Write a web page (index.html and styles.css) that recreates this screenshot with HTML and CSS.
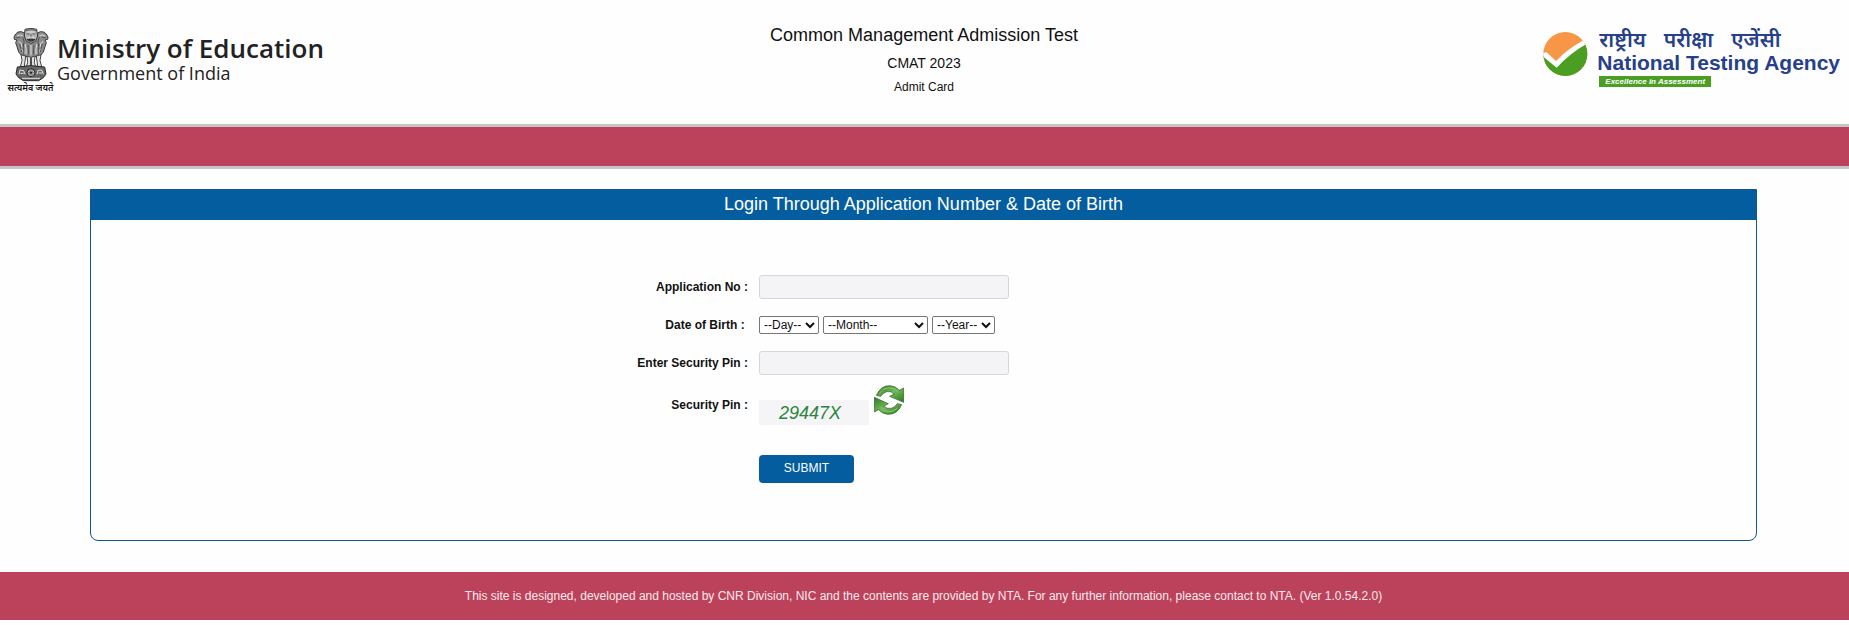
FILE: index.html
```
<!DOCTYPE html>
<html lang="en">
<head>
    <meta charset="UTF-8">
    <meta name="viewport" content="width=device-width, initial-scale=1.0">
    <title>CMAT 2023 - Admit Card</title>
    <link rel="stylesheet" href="styles.css">
</head>
<body>
    <header>
        <div class="ministry">
            <div class="emblem">
                <svg width="36" height="54" viewBox="0 0 108 162" aria-hidden="true">
                    <!-- lions -->
                    <g fill="#8c8c8c" stroke="#3a3a3a" stroke-width="3" stroke-linejoin="round">
                        <path d="M36 16 L26 11 L15 12 L8 18 L3 27 L4 34 L12 36 L8 44 L12 56 L17 72 L27 84 L44 86 L54 91 L64 86 L81 84 L91 72 L96 56 L100 44 L96 36 L104 34 L105 27 L100 18 L92 12 L82 11 L72 16 Z"/>
                        <path d="M36 4 Q54 -2 71 4 L74 24 L68 40 L54 46 L40 40 L34 24 Z" fill="#b4b4b4"/>
                    </g>
                    <g fill="none" stroke="#e4e4e4" stroke-width="3">
                        <path d="M12 25 Q20 17 29 23 M96 25 Q88 17 79 23"/>
                        <path d="M17 40 Q28 44 27 58 M91 40 Q80 44 81 58"/>
                        <path d="M22 62 Q31 65 33 76 M86 62 Q77 65 75 76"/>
                        <path d="M36 48 Q41 62 39 78 M72 48 Q67 62 69 78 M54 51 V82"/>
                        <path d="M43 12 H65 M43 30 Q54 22 65 30"/>
                    </g>
                    <g fill="none" stroke="#333" stroke-width="2">
                        <path d="M38 8 Q54 2 70 8 M41 18 H50 M58 18 H67 M54 18 V27"/>
                        <path d="M42 34 Q54 44 66 34 M46 34 H62" stroke-width="4"/>
                        <path d="M10 29 H20 M98 29 H88 M29 28 Q37 42 31 55 M79 28 Q71 42 77 55"/>
                        <path d="M20 48 L26 72 M30 48 L32 80 M45 50 L47 80 M63 50 L61 80 M78 48 L76 80 M88 48 L82 72"/>
                    </g>
                    <!-- legs -->
                    <g fill="#e2e2e2" stroke="#444" stroke-width="3">
                        <path d="M24 80 L27 98 L22 116 H34 L38 84 Z"/>
                        <path d="M84 80 L81 98 L86 116 H74 L70 84 Z"/>
                        <path d="M42 84 L44 104 L39 119 H52 L53 88 Z"/>
                        <path d="M66 84 L64 104 L69 119 H56 L55 88 Z"/>
                    </g>
                    <!-- abacus with the wheel -->
                    <path d="M13 117 Q54 109 95 117 L99 138 L91 149 L77 158 H31 L17 149 L9 138 Z" fill="#666" stroke="#2a2a2a" stroke-width="3"/>
                    <circle cx="54" cy="134" r="12" fill="#c8c8c8" stroke="#222" stroke-width="3"/>
                    <path d="M54 123 V145 M43 134 H65 M46 126 L62 142 M62 126 L46 142" stroke="#444" stroke-width="2"/>
                    <circle cx="54" cy="134" r="3" fill="#222"/>
                    <path d="M18 139 L21 126 L32 128 L36 139 M23 136 H32 M72 139 L75 127 L86 126 L91 139 M77 135 H87 M27 151 H81" fill="none" stroke="#e2e2e2" stroke-width="3"/>
                </svg>
                <span class="motto" lang="hi">सत्यमेव जयते</span>
            </div>
            <div class="ministry-text">
                <div class="ministry-name">Ministry of Education</div>
                <div class="ministry-gov">Government of India</div>
            </div>
        </div>

        <div class="exam">
            <h1>Common Management Admission Test</h1>
            <h2>CMAT 2023</h2>
            <h3>Admit Card</h3>
        </div>

        <div class="agency">
            <svg width="46" height="46" viewBox="0 0 138 138" aria-hidden="true">
                <defs>
                    <clipPath id="disc"><circle cx="70" cy="69" r="66"/></clipPath>
                </defs>
                <g clip-path="url(#disc)">
                    <rect width="138" height="138" fill="#f79646"/>
                    <path d="M0 70 L43 103 L138 28 V138 H0 Z" fill="#4a9e22"/>
                    <path d="M-4 67 L14 64 L42 90 Q76 54 126 27 L138 36 Q82 68 44 110 L0 74 Z" fill="#fff"/>
                </g>
            </svg>
            <div class="agency-text">
                <div class="agency-hindi" lang="hi"><span>राष्ट्रीय</span> <span>परीक्षा</span> <span>एजेंसी</span></div>
                <div class="agency-name">National Testing Agency</div>
                <div class="agency-tag">Excellence in Assessment</div>
            </div>
        </div>
    </header>

    <nav class="band"></nav>

    <main>
        <h2 class="panel-title">Login Through Application Number &amp; Date of Birth</h2>
        <form class="login">
            <div class="row">
                <label for="appNo">Application No :</label>
                <div class="field"><input type="text" id="appNo"></div>
            </div>
            <div class="row">
                <label for="day">Date of Birth :&nbsp;</label>
                <div class="field dob">
                    <select id="day" class="day"><option>--Day--</option></select>
                    <select id="month" class="month" aria-label="Month"><option>--Month--</option></select>
                    <select id="year" class="year" aria-label="Year"><option>--Year--</option></select>
                </div>
            </div>
            <div class="row">
                <label for="pin">Enter Security Pin :</label>
                <div class="field"><input type="text" id="pin"></div>
            </div>
            <div class="row pin-row">
                <span class="label">Security Pin :</span>
                <div class="field pin">
                    <div class="captcha">29447X</div>
                    <button type="button" class="refresh" aria-label="Refresh security pin">
                        <svg width="30" height="30" viewBox="0 0 90 90">
                            <defs>
                                <linearGradient id="leaf" x1="0" y1="0" x2="1" y2="1">
                                    <stop offset="0" stop-color="#2f7a22"/>
                                    <stop offset="0.5" stop-color="#74b85a"/>
                                    <stop offset="1" stop-color="#2a7a1c"/>
                                </linearGradient>
                            </defs>
                            <g fill="url(#leaf)" stroke="#245c1c" stroke-width="2" stroke-linejoin="round">
                                <path d="M7 31 Q20 1 48 2 Q65 3 76 16 L89 9 V52 L47 34 L61 27 Q52 17 38 20 Q28 22 20 34 Z"/>
                                <path d="M83 59 Q70 89 42 88 Q25 87 14 74 L1 81 V37 L43 56 L29 63 Q38 73 52 70 Q62 68 70 56 Z"/>
                            </g>
                            <path d="M16 25 Q28 8 46 8 Q62 9 73 22 M20 67 Q30 80 44 80 Q60 80 70 70" fill="none" stroke="#8ac872" stroke-width="3"/>
                        </svg>
                    </button>
                </div>
            </div>
            <div class="row submit-row">
                <div class="field"><button type="submit" class="submit">SUBMIT</button></div>
            </div>
        </form>
    </main>

    <footer>
        <p>This site is designed, developed and hosted by CNR Division, NIC and the contents are provided by NTA. For any further information, please contact to NTA. (Ver 1.0.54.2.0)</p>
    </footer>
</body>
</html>
```
FILE: styles.css
```
* {
    margin: 0;
    padding: 0;
    box-sizing: border-box;
}

body {
    font-family: "Liberation Sans", Arial, sans-serif;
    font-size: 12px;
    background: #fefefe;
    color: #111;
}

/* Header */
header {
    display: grid;
    grid-template-columns: 1fr auto 1fr;
    min-height: 124px;
    padding: 0 9px 0 8px;
}

.ministry {
    display: flex;
    align-items: flex-start;
    gap: 4px;
    padding-top: 28px;
}

.emblem {
    display: flex;
    flex-direction: column;
    align-items: center;
    width: 45px;
}

.motto {
    font-family: "Noto Sans", sans-serif;
    font-size: 9px;
    font-weight: 600;
    line-height: 12px;
    white-space: nowrap;
}

.ministry-text {
    font-family: "Open Sans", "Noto Sans", sans-serif;
    color: #222;
    padding-top: 5px;
}

.ministry-name {
    font-size: 26px;
    font-weight: 600;
    line-height: 30px;
}

.ministry-gov {
    font-size: 18px;
    line-height: 20px;
}

.exam {
    text-align: center;
    padding-top: 24px;
}

.exam h1 {
    font-size: 18px;
    font-weight: normal;
    line-height: 22px;
}

.exam h2 {
    font-size: 14px;
    font-weight: normal;
    line-height: 34px;
}

.exam h3 {
    font-size: 12px;
    font-weight: normal;
    line-height: 14px;
}

.agency {
    display: flex;
    justify-content: flex-end;
    gap: 9px;
    padding-top: 29px;
}

.agency svg {
    margin-top: 2px;
}

.agency-text {
    color: #27408b;
    white-space: nowrap;
}

.agency-hindi {
    display: flex;
    gap: 18px;
    font-family: "Noto Sans", sans-serif;
    font-size: 21px;
    font-weight: 600;
    line-height: 20px;
    padding-left: 2px;
}

.agency-name {
    font-size: 21px;
    font-weight: bold;
    line-height: 27px;
}

.agency-tag {
    width: fit-content;
    background: #4a9e22;
    color: #fff;
    font-size: 8px;
    font-weight: bold;
    font-style: italic;
    line-height: 11px;
    margin-left: 2px;
    padding: 0 6px;
}

.band {
    height: 45px;
    background: #bc425b;
    border-top: 3px solid #c5c5c5;
    border-bottom: 3px solid #c5c5c5;
}

/* Login panel */
main {
    margin: 20px 92px 31px 90px;
    border: 1px solid #14568a;
    border-radius: 0 0 8px 8px;
}

.panel-title {
    background: #045d9f;
    color: #fff;
    font-size: 18px;
    font-weight: normal;
    line-height: 28px;
    padding-bottom: 2px;
    text-align: center;
}

.login {
    padding: 48px 0 57px;
}

.row {
    display: grid;
    grid-template-columns: 40% 1fr;
    align-items: center;
    min-height: 38px;
}

.row label,
.row .label {
    font-weight: bold;
    text-align: right;
    padding-right: 9px;
}

.field {
    grid-column: 2;
    padding-left: 2px;
}

.field input {
    display: block;
    width: 250px;
    height: 24px;
    padding: 0 6px;
    background: #f4f3f6;
    border: 1px solid #d8d6dc;
    border-radius: 3px;
}

.dob {
    display: flex;
    gap: 4px;
}

.dob select {
    height: 18px;
    background: #fff;
    color: #111;
    border: 1px solid #767676;
    border-radius: 2px;
    font-family: inherit;
    font-size: 12px;
}

.day {
    width: 60px;
}

.month {
    width: 105px;
}

.year {
    width: 63px;
}

.pin-row {
    min-height: 45px;
}

.pin {
    display: flex;
    align-items: flex-end;
    gap: 5px;
}

.captcha {
    width: 110px;
    height: 25px;
    padding-right: 8px;
    background: #f5f5f7;
    color: #2c853a;
    font-size: 18px;
    font-style: italic;
    line-height: 26px;
    text-align: center;
}

.refresh {
    height: 40px;
    padding-bottom: 10px;
    background: none;
    border: none;
    cursor: pointer;
}

.refresh svg {
    display: block;
}

.submit-row {
    min-height: 28px;
    margin-top: 28px;
}

.submit {
    display: block;
    width: 95px;
    height: 28px;
    padding-bottom: 2px;
    background: #045d9f;
    color: #fff;
    border: none;
    border-radius: 4px;
    font-family: inherit;
    font-size: 12px;
    cursor: pointer;
}

footer {
    background: #bc425b;
    color: #fbe9ee;
    line-height: 16px;
    padding: 16px 18px 16px 16px;
    text-align: center;
}
```
